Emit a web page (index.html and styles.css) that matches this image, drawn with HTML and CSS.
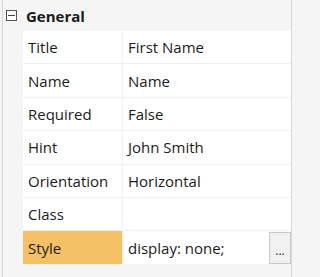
FILE: index.html
```html
<!DOCTYPE html>
<html>
<head>
<meta charset="utf-8">
<link rel="stylesheet" href="styles.css">
</head>
<body>
<div class="panel">
  <div class="category">
    <span class="toggle"><span class="minus"></span></span>
    <span class="cat-title">General</span>
  </div>
  <div class="grid">
    <div class="label">Title</div><div class="value">First Name</div>
    <div class="label">Name</div><div class="value">Name</div>
    <div class="label">Required</div><div class="value">False</div>
    <div class="label">Hint</div><div class="value">John Smith</div>
    <div class="label">Orientation</div><div class="value">Horizontal</div>
    <div class="label">Class</div><div class="value"></div>
    <div class="label selected">Style</div>
    <div class="value with-button"><span class="text">display: none;</span><span class="dots">...</span></div>
  </div>
</div>
</body>
</html>
```
FILE: styles.css
```css
html, body {
  margin: 0;
  padding: 0;
  background: #f5f5f5;
}
body {
  font-family: "Open Sans", "Noto Sans", sans-serif;
  color: #1b1b1b;
}
.panel {
  margin-left: 2px;
  width: 288px;
  height: 277px;
  border-left: 1px solid #d7d7d7;
  border-right: 1px solid #d7d7d7;
  background: #f5f5f5;
  box-sizing: content-box;
}
.category {
  height: 31px;
  display: flex;
  align-items: center;
  padding-left: 3px;
}
.toggle {
  width: 9px;
  height: 9px;
  border: 1px solid #555;
  background: #fbfbfb;
  display: flex;
  align-items: center;
  justify-content: center;
  margin-top: 0px;
}
.minus {
  width: 7px;
  height: 1px;
  background: #444;
}
.cat-title {
  font-weight: 700;
  font-size: 15px;
  margin-left: 9px;
  line-height: 20px;
}
.grid {
  margin-left: 20px;
  display: grid;
  grid-template-columns: 99px 1fr;
  grid-auto-rows: 32.4px;
  gap: 1px;
  background: #f0f0f0;
}
.label, .value {
  background: #fff;
  font-size: 15px;
  display: flex;
  align-items: center;
  padding-left: 5px;
  white-space: nowrap;
}
.label.selected {
  background: #f6c165;
}
.with-button {
  padding-right: 0;
  justify-content: space-between;
}
.dots {
  width: 22px;
  height: 32px;
  margin-top: 1px;
  border: 1px solid #c9c9c9;
  background: #f1f1f1;
  font-size: 12px;
  display: flex;
  align-items: flex-end;
  justify-content: center;
  padding-bottom: 4px;
  box-sizing: border-box;
  color: #222;
}
```
